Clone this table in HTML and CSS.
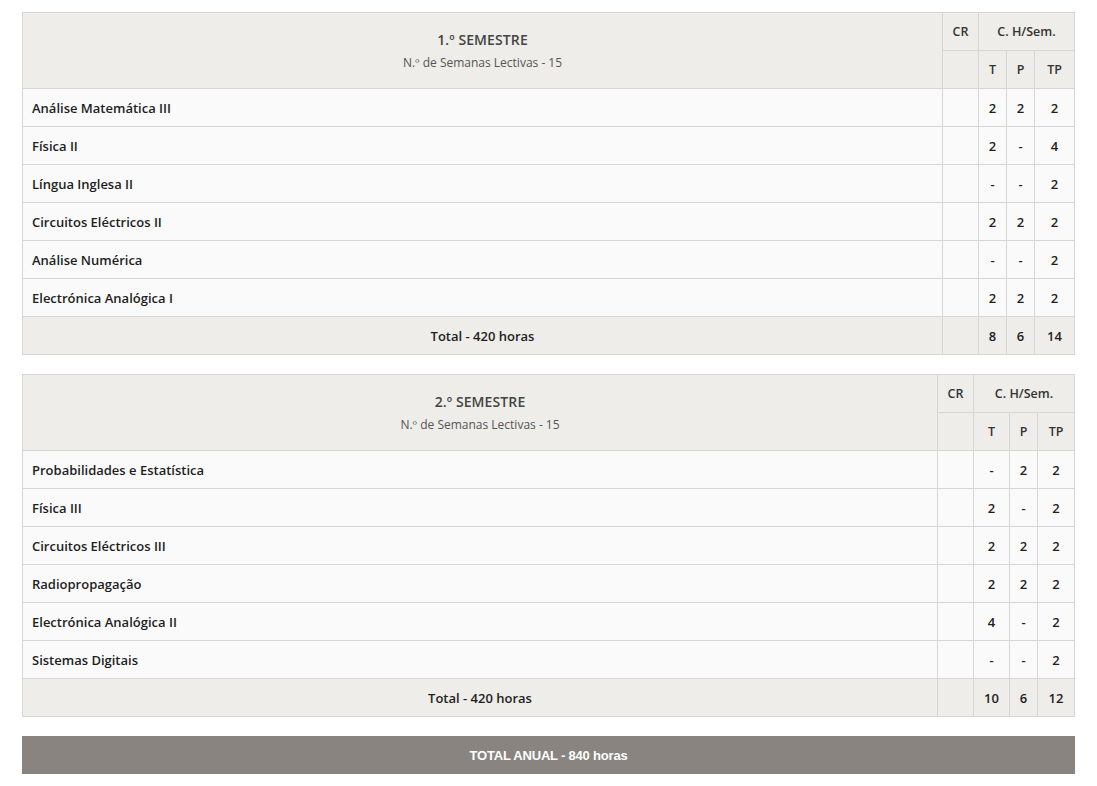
FILE: index.html
```html
<!DOCTYPE html>
<html lang="pt">
<head>
<meta charset="utf-8">
<link rel="stylesheet" href="styles.css">
</head>
<body>
<div class="page">
  <table class="plan plan-1">
    <colgroup>
      <col class="c-name"><col class="c-cr"><col class="c-t"><col class="c-p"><col class="c-tp">
    </colgroup>
    <thead>
      <tr>
        <th rowspan="2" class="sem"><div class="sem-title">1.º SEMESTRE</div><div class="sem-sub">N.º de Semanas Lectivas - 15</div></th>
        <th class="hd">CR</th>
        <th colspan="3" class="hd">C. H/Sem.</th>
      </tr>
      <tr>
        <th class="hd"></th><th class="hd">T</th><th class="hd">P</th><th class="hd">TP</th>
      </tr>
    </thead>
    <tbody>
      <tr><td class="name">Análise Matemática III</td><td></td><td class="n">2</td><td class="n">2</td><td class="n">2</td></tr>
      <tr><td class="name">Física II</td><td></td><td class="n">2</td><td class="n">-</td><td class="n">4</td></tr>
      <tr><td class="name">Língua Inglesa II</td><td></td><td class="n">-</td><td class="n">-</td><td class="n">2</td></tr>
      <tr><td class="name">Circuitos Eléctricos II</td><td></td><td class="n">2</td><td class="n">2</td><td class="n">2</td></tr>
      <tr><td class="name">Análise Numérica</td><td></td><td class="n">-</td><td class="n">-</td><td class="n">2</td></tr>
      <tr><td class="name">Electrónica Analógica I</td><td></td><td class="n">2</td><td class="n">2</td><td class="n">2</td></tr>
      <tr class="total"><td class="tot-label">Total - 420 horas</td><td></td><td class="n">8</td><td class="n">6</td><td class="n">14</td></tr>
    </tbody>
  </table>

  <table class="plan plan-2">
    <colgroup>
      <col class="c-name"><col class="c-cr"><col class="c-t"><col class="c-p"><col class="c-tp">
    </colgroup>
    <thead>
      <tr>
        <th rowspan="2" class="sem"><div class="sem-title">2.º SEMESTRE</div><div class="sem-sub">N.º de Semanas Lectivas - 15</div></th>
        <th class="hd">CR</th>
        <th colspan="3" class="hd">C. H/Sem.</th>
      </tr>
      <tr>
        <th class="hd"></th><th class="hd">T</th><th class="hd">P</th><th class="hd">TP</th>
      </tr>
    </thead>
    <tbody>
      <tr><td class="name">Probabilidades e Estatística</td><td></td><td class="n">-</td><td class="n">2</td><td class="n">2</td></tr>
      <tr><td class="name">Física III</td><td></td><td class="n">2</td><td class="n">-</td><td class="n">2</td></tr>
      <tr><td class="name">Circuitos Eléctricos III</td><td></td><td class="n">2</td><td class="n">2</td><td class="n">2</td></tr>
      <tr><td class="name">Radiopropagação</td><td></td><td class="n">2</td><td class="n">2</td><td class="n">2</td></tr>
      <tr><td class="name">Electrónica Analógica II</td><td></td><td class="n">4</td><td class="n">-</td><td class="n">2</td></tr>
      <tr><td class="name">Sistemas Digitais</td><td></td><td class="n">-</td><td class="n">-</td><td class="n">2</td></tr>
      <tr class="total"><td class="tot-label">Total - 420 horas</td><td></td><td class="n">10</td><td class="n">6</td><td class="n">12</td></tr>
    </tbody>
  </table>

  <div class="annual">TOTAL ANUAL - 840 horas</div>
</div>
</body>
</html>
```

FILE: styles.css
```css
html, body {
  margin: 0;
  padding: 0;
  background: #ffffff;
}
body {
  font-family: "Open Sans", "Noto Sans", sans-serif;
  color: #222;
}
.page {
  padding: 12px 22px 0 22px;
  display: flex;
  flex-direction: column;
  gap: 19px;
}
.plan {
  width: 100%;
  border-collapse: collapse;
  table-layout: fixed;
  border: 1px solid #cfcfcf;
}
.plan-1 .c-cr { width: 36px; }
.plan-1 .c-t { width: 28px; }
.plan-1 .c-p { width: 28px; }
.plan-1 .c-tp { width: 40px; }
.plan-2 .c-cr { width: 36px; }
.plan-2 .c-t { width: 36px; }
.plan-2 .c-p { width: 28px; }
.plan-2 .c-tp { width: 37px; }

.plan th, .plan td {
  border: 1px solid #d6d6d6;
  height: 38px;
  padding: 0;
  box-sizing: border-box;
}
.plan thead th {
  background: #eeede9;
  font-weight: 600;
  font-size: 12.5px;
  color: #333;
  text-align: center;
  vertical-align: middle;
}
.plan th.sem {
  vertical-align: middle;
}
.sem-title {
  font-size: 14px;
  font-weight: 600;
  color: #444;
  letter-spacing: 0.1px;
}
.sem-sub {
  font-size: 12px;
  font-weight: 400;
  color: #555;
  margin-top: 5px;
}
.plan tbody td {
  background: #fafafa;
  font-size: 13px;
  font-weight: 600;
  color: #1e1e1e;
}
.plan td.name {
  padding-left: 9px;
  text-align: left;
}
.plan td.n {
  text-align: center;
}
.plan tr.total td {
  background: #eeede9;
}
.plan td.tot-label {
  text-align: center;
}
.annual {
  height: 38px;
  background: #8a8480;
  color: #fff;
  font-family: "Liberation Sans", Arial, sans-serif;
  font-weight: 700;
  font-size: 13px;
  letter-spacing: -0.2px;
  display: flex;
  align-items: center;
  justify-content: center;
}
```
